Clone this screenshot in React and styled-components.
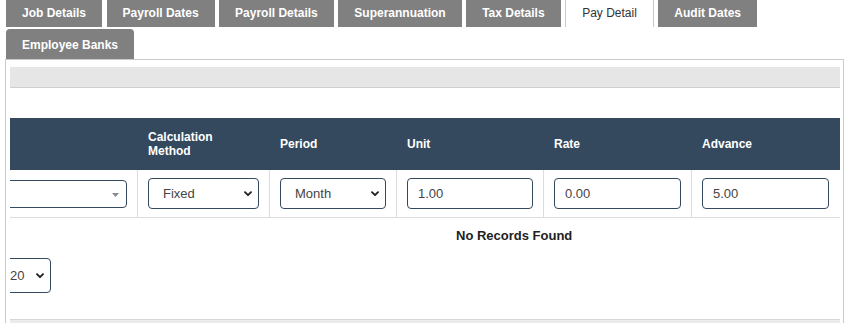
import React from "react";
import styled, { createGlobalStyle } from "styled-components";

const GlobalStyle = createGlobalStyle`
  html, body { margin: 0; padding: 0; background: #fff; overflow: hidden; }
  body { font-family: "Liberation Sans", Arial, sans-serif; color: #333; }
  * { box-sizing: border-box; }
`;

const Page = styled.div`
  padding: 0 2px 0 5px;
`;

const TabStrip = styled.ul`
  list-style: none;
  margin: -3px 0 0 1px;
  padding: 0;
  display: flex;
  flex-wrap: wrap;
  row-gap: 2px;
  column-gap: 4.5px;
`;

const Tab = styled.li`
  height: 30px;
  display: flex;
  align-items: center;
  padding: 0 ${(p) => (p.$active ? "16px" : "15px")};
  border: 1px solid ${(p) => (p.$active ? "#c8c8c8" : "#808080")};
  border-bottom: none;
  border-radius: 4px 4px 0 0;
  background: ${(p) => (p.$active ? "#fff" : "#808080")};
  color: ${(p) => (p.$active ? "#333" : "#fff")};
  font-size: 12px;
  font-weight: ${(p) => (p.$active ? 400 : 700)};
  white-space: nowrap;
`;

const Panel = styled.div`
  border: 1px solid #cacaca;
  padding: 7px 3px 0 4px;
  height: 400px;
  overflow: hidden;
`;

const GreyBar = styled.div`
  height: 21px;
  background: #e6e6e6;
  border-bottom: 1px solid #cfcfcf;
`;

const TableWrap = styled.div`
  margin-top: 30px;
  overflow: hidden;
`;

const Grid = styled.div`
  display: grid;
  grid-template-columns: 127px 132px 127px 147px 148px 148px;
`;

const HeadRow = styled(Grid)`
  height: 52px;
  background: #34495e;
`;

const HeadCell = styled.div`
  display: flex;
  align-items: center;
  padding: 0 10px;
  border-left: ${(p) => (p.$first ? "none" : "1px solid #34495e")};
  color: #fff;
  font-size: 12px;
  font-weight: 700;
  line-height: 14px;
`;

const BodyRow = styled(Grid)`
  height: 48px;
  border-bottom: 1px solid #dcdcdc;
`;

const Cell = styled.div`
  display: flex;
  align-items: center;
  padding: 0 10px;
  border-left: ${(p) => (p.$first ? "none" : "1px solid #dcdcdc")};
`;

const FieldBox = styled.div`
  position: relative;
  width: ${(p) => p.$width || "100%"};
  margin-left: ${(p) => p.$offset || "0"};
  height: ${(p) => p.$height || "31px"};
  flex: none;
`;

const NativeSelect = styled.select`
  appearance: none;
  -webkit-appearance: none;
  width: 100%;
  height: 100%;
  border: 1px solid #34495e;
  border-radius: 4px;
  background: #fff;
  font-family: "Liberation Sans", Arial, sans-serif;
  font-size: 13px;
  color: #444;
  padding: 0 24px 0 ${(p) => p.$pad || "14px"};
  outline: none;
`;

const TextInput = styled.input`
  width: 100%;
  height: 31px;
  border: 1px solid #34495e;
  border-radius: 4px;
  background: #fff;
  font-family: "Liberation Sans", Arial, sans-serif;
  font-size: 13px;
  color: #444;
  padding: 0 10px;
  outline: none;
`;

const Chevron = styled.svg`
  position: absolute;
  right: ${(p) => p.$right || "7px"};
  top: 50%;
  margin-top: -3px;
  pointer-events: none;
`;

const Caret = styled.svg`
  position: absolute;
  right: 8px;
  top: 50%;
  margin-top: -1px;
  pointer-events: none;
`;

const ComboBox = styled.div`
  width: 100%;
  height: 100%;
  border: 1px solid #34495e;
  border-radius: 4px;
  background: #fff;
`;

const NoRecords = styled.div`
  padding: 10px 0 10px 446px;
  font-size: 13px;
  line-height: 15px;
  font-weight: 700;
  color: #222;
`;

const Pager = styled.div`
  margin-top: 5px;
  display: flex;
`;

const BottomBar = styled.div`
  margin-top: 26px;
  height: 30px;
  background: #ebebeb;
  border-top: 1px solid #d6d6d6;
`;

const ChevronIcon = ({ right }) => (
  <Chevron $right={right} width="8" height="6" viewBox="0 0 8 6">
    <path d="M1 1.2 L4 4.2 L7 1.2" fill="none" stroke="#222" strokeWidth="1.9" strokeLinecap="round" strokeLinejoin="round" />
  </Chevron>
);

const SelectField = ({ value, options, width, offset, height, pad, right }) => (
  <FieldBox $width={width} $offset={offset} $height={height}>
    <NativeSelect defaultValue={value} $pad={pad}>
      {options.map((o) => (
        <option key={o}>{o}</option>
      ))}
    </NativeSelect>
    <ChevronIcon right={right} />
  </FieldBox>
);

const tabsRow = [
  "Job Details",
  "Payroll Dates",
  "Payroll Details",
  "Superannuation",
  "Tax Details",
  "Pay Detail",
  "Audit Dates",
  "Employee Banks",
];

const headers = ["", "Calculation\nMethod", "Period", "Unit", "Rate", "Advance"];

export default function App() {
  return (
    <Page>
      <GlobalStyle />
      <TabStrip>
        {tabsRow.map((t) => (
          <Tab key={t} $active={t === "Pay Detail"}>
            {t}
          </Tab>
        ))}
      </TabStrip>
      <Panel>
        <GreyBar />
        <TableWrap>
          <HeadRow>
            {headers.map((h, i) => (
              <HeadCell key={i} $first={i === 0}>
                <span>
                  {h.split("\n").map((line, j) => (
                    <React.Fragment key={j}>
                      {j > 0 && <br />}
                      {line}
                    </React.Fragment>
                  ))}
                </span>
              </HeadCell>
            ))}
          </HeadRow>
          <BodyRow>
            <Cell $first>
              <FieldBox $width="137px" $offset="-30px" $height="28px">
                <ComboBox />
                <Caret width="7" height="4" viewBox="0 0 7 4">
                  <path d="M0 0 L7 0 L3.5 4 Z" fill="#8a8a8a" />
                </Caret>
              </FieldBox>
            </Cell>
            <Cell>
              <SelectField value="Fixed" options={["Fixed", "Variable"]} />
            </Cell>
            <Cell>
              <SelectField value="Month" options={["Week", "Fortnight", "Month"]} />
            </Cell>
            <Cell>
              <TextInput defaultValue="1.00" />
            </Cell>
            <Cell>
              <TextInput defaultValue="0.00" />
            </Cell>
            <Cell>
              <TextInput defaultValue="5.00" />
            </Cell>
          </BodyRow>
          <NoRecords>No Records Found</NoRecords>
          <Pager>
            <SelectField
              value="20"
              options={["10", "20", "50"]}
              width="53px"
              offset="-12px"
              height="35px"
              pad="11px"
              right="7px"
            />
          </Pager>
          <BottomBar />
        </TableWrap>
      </Panel>
    </Page>
  );
}
